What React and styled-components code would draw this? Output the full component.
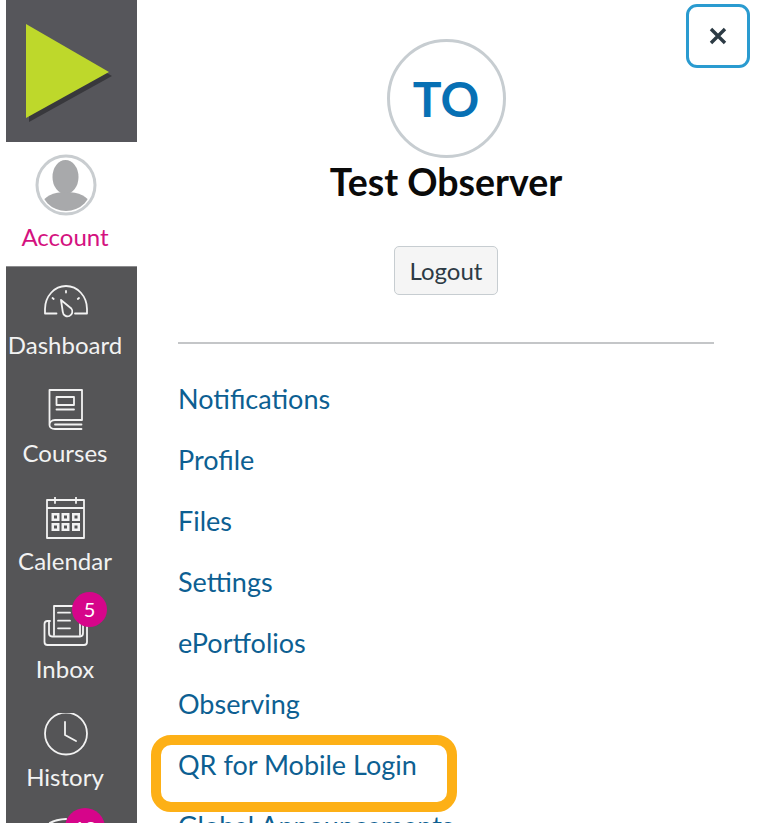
import React from "react";
import styled, { createGlobalStyle } from "styled-components";

const GlobalStyle = createGlobalStyle`
html, body {
    margin: 0;
    padding: 0;
    background: #fff;
}
body {
    font-family: Lato, "Open Sans", sans-serif;
}
`

const Page = styled.div`
width: 776px;
height: 823px;
display: flex;
overflow: hidden;
position: relative;
background: #fff;
`

const Sidebar = styled.nav`
width: 131px;
margin-left: 6px;
flex-shrink: 0;
display: flex;
flex-direction: column;
`

const LogoBox = styled.div`
height: 142px;
flex-shrink: 0;
background: #56565b;
padding: 24px 0 0 19px;
box-sizing: border-box;
`

const AccountItem = styled.div`
height: 124px;
flex-shrink: 0;
display: flex;
flex-direction: column;
align-items: center;
padding: 12px 13px 0 0;
box-sizing: border-box;
color: #d4127f;
font-size: 24px;
line-height: 30px;
`

const AccountAvatar = styled.svg`
width: 62px;
height: 62px;
margin: 0 0 6px 1px;
`

const NavList = styled.div`
flex: 1;
background: #555557;
display: flex;
flex-direction: column;
border-top: 1px solid #8c8c8e;
`

const NavItem = styled.div`
height: 108px;
flex-shrink: 0;
position: relative;
display: flex;
flex-direction: column;
align-items: center;
padding: 14px 13px 0 0;
box-sizing: border-box;
color: #f2f2f2;
font-size: 24px;
line-height: 30px;
`

const IconSlot = styled.svg`
width: 48px;
height: 48px;
margin: 0 0 1px 2px;
flex-shrink: 0;
fill: none;
stroke: #f2f2f2;
stroke-width: 1.8;
stroke-linecap: round;
stroke-linejoin: round;
`

const CutOffIcon = styled(IconSlot)`
margin-top: -7px;
stroke-width: 2.2;
`

const Badge = styled.span`
position: absolute;
top: ${props => props.$top}px;
left: ${props => props.$left}px;
width: ${props => props.$size}px;
height: ${props => props.$size}px;
border-radius: 50%;
background: #d6058a;
color: #fff;
font-size: 20px;
line-height: ${props => props.$size}px;
text-align: center;
`

const Panel = styled.main`
flex: 1;
padding: 39px 62px 0 41px;
display: flex;
flex-direction: column;
`

const CloseButton = styled.button`
position: absolute;
left: 686px;
top: 4px;
width: 64px;
height: 64px;
box-sizing: border-box;
border: 3px solid #2a9bd0;
border-radius: 11px;
background: #fff;
padding: 0;
display: flex;
align-items: center;
justify-content: center;
`

const Profile = styled.header`
display: flex;
flex-direction: column;
align-items: center;
flex-shrink: 0;
`

const Avatar = styled.div`
width: 119px;
height: 119px;
box-sizing: border-box;
border: 3px solid #c7cdd1;
border-radius: 50%;
display: flex;
align-items: center;
justify-content: center;
color: #0770b4;
font-size: 48px;
font-weight: 700;
`

const Name = styled.h1`
margin: 1px 0 0;
font-size: 37.5px;
line-height: 46px;
font-weight: 700;
color: #0a0a0a;
`

const LogoutButton = styled.button`
margin-top: 41px;
width: 104px;
height: 49px;
box-sizing: border-box;
background: #f5f5f5;
border: 1.5px solid #c7cdd1;
border-radius: 5px;
color: #2d3b45;
font-family: inherit;
font-size: 24px;
padding: 0;
`

const Divider = styled.hr`
margin: 47px 0 0;
border: 0;
height: 2px;
flex-shrink: 0;
background: #c4c6c8;
`

const LinkList = styled.ul`
list-style: none;
margin: 24px 0 0;
padding: 0;
display: flex;
flex-direction: column;
flex-shrink: 0;
`

const LinkItem = styled.li`
height: 61px;
line-height: 61px;
font-size: 27px;
color: #0d5f92;
white-space: nowrap;
`

const Highlight = styled.div`
position: absolute;
left: 151px;
top: 735px;
width: 306px;
height: 77px;
box-sizing: border-box;
border: 10px solid #fdb016;
border-radius: 20px;
`

const links = ["Notifications", "Profile", "Files", "Settings", "ePortfolios", "Observing", "QR for Mobile Login", "Global Announcements"];

const App = () => {
    return (
        <Page>
            <GlobalStyle />
            <Sidebar>
                <LogoBox>
                    <svg width="92" height="102" viewBox="0 0 92 102">
                        <polygon points="1,0 84,48 1,94" fill="#38383c" transform="translate(3,4)" />
                        <polygon points="1,0 84,48 1,94" fill="#bed82b" />
                    </svg>
                </LogoBox>
                <AccountItem>
                    <AccountAvatar viewBox="0 0 62 62">
                        <defs>
                            <clipPath id="acc">
                                <circle cx="31" cy="31" r="26" />
                            </clipPath>
                        </defs>
                        <g clipPath="url(#acc)" fill="#a8a9ab">
                            <ellipse cx="30.500" cy="23" rx="13" ry="17" />
                            <ellipse cx="31" cy="49" rx="23" ry="11" />
                        </g>
                        <circle cx="31" cy="31" r="29" fill="none" stroke="#c9cdd0" strokeWidth="3" />
                    </AccountAvatar>
                    Account
                </AccountItem>
                <NavList>
                    <NavItem>
                        <IconSlot viewBox="0 0 48 48">
                            <path d="M14.500 32.500H3V28A21 23 0 0 1 45 28V32.500H33" />
                            <path d="M19 19L29.300 27.500A4.800 4.800 0 1 1 20.800 31Z" />
                            <path d="M24 10v1.500M10.500 17l1.200 1M37 17l-1.200 1" />
                        </IconSlot>
                        Dashboard
                    </NavItem>
                    <NavItem>
                        <IconSlot viewBox="0 0 48 48">
                            <path d="M7.500 36V1H40V31H13C9.500 31 7.500 33.500 7.500 36C7.500 38 9.500 40 13 40H39.500" />
                            <path d="M14.500 8H32V16H14.500ZM14.500 20.500H32" />
                            <path d="M13 35.500H39.500" />
                        </IconSlot>
                        Courses
                    </NavItem>
                    <NavItem>
                        <IconSlot viewBox="0 0 48 48">
                            <path d="M5 3H42V41H5ZM5 11H42M13 0.500V6M34 0.500V6" />
                            <path d="M9.500 16H17.500V24H9.500ZM19.500 16H27.500V24H19.500ZM30 16H38V24H30ZM9.500 26H17.500V34H9.500ZM19.500 26H27.500V34H19.500ZM30 26H38V34H30Z" fill="#f2f2f2" stroke="none" />
                            <path d="M12 18.500H15V21.500H12ZM22 18.500H25V21.500H22ZM32.500 18.500H35.500V21.500H32.500ZM12 28.500H15V31.500H12ZM22 28.500H25V31.500H22ZM32.500 28.500H35.500V31.500H32.500Z" fill="#555557" stroke="none" />
                        </IconSlot>
                        Calendar
                    </NavItem>
                    <NavItem>
                        <IconSlot viewBox="0 0 48 48">
                            <path d="M8 16H5.500Q2.500 16 2.500 19V37Q2.500 40 5.500 40H42Q45 40 45 37V19Q45 16 42 16H40" />
                            <path d="M7 17V28Q7 31.500 10 31.500H38Q41 31.500 41 28V17" />
                            <path d="M12 30V1H38V30" />
                            <path d="M16 7.700H28M16 15.700H28M16 23.300H28" />
                        </IconSlot>
                        Inbox
                        <Badge $top={1} $left={66} $size={35}>5</Badge>
                    </NavItem>
                    <NavItem>
                        <IconSlot viewBox="0 0 48 48">
                            <circle cx="24" cy="20.500" r="21" />
                            <path d="M23 9V22L34 28" />
                        </IconSlot>
                        History
                    </NavItem>
                    <NavItem>
                        <CutOffIcon viewBox="0 0 48 48">
                            <path d="M8 9Q14 5.500 24 5" />
                        </CutOffIcon>
                        <Badge $top={1} $left={59} $size={40}>18</Badge>
                    </NavItem>
                </NavList>
            </Sidebar>
            <Panel>
                <CloseButton aria-label="Close">
                    <svg width="20" height="20" viewBox="0 0 20 20">
                        <path d="M3 3l14 14M17 3L3 17" stroke="#2d3b45" strokeWidth="3.4" />
                    </svg>
                </CloseButton>
                <Profile>
                    <Avatar>TO</Avatar>
                    <Name>Test Observer</Name>
                    <LogoutButton>Logout</LogoutButton>
                </Profile>
                <Divider />
                <LinkList>
                    {links.map(link => <LinkItem key={link}>{link}</LinkItem>)}
                </LinkList>
            </Panel>
            <Highlight />
        </Page>
    )
}

export default App;
